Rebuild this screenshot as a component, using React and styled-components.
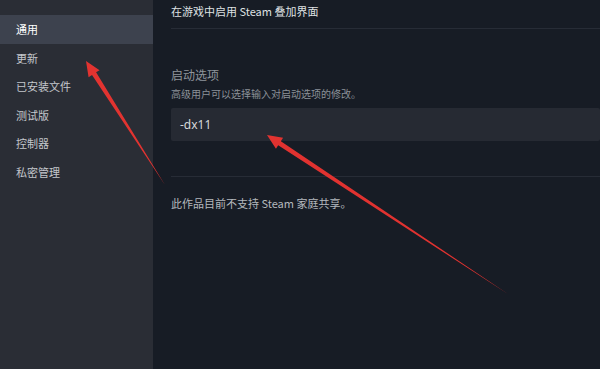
import styled, { createGlobalStyle } from "styled-components"

const GlobalStyle = createGlobalStyle`
  html, body {
    margin: 0;
    padding: 0;
    background: #171c25;
  }
  body {
    font-family: "Noto Sans CJK SC", "Noto Sans", sans-serif;
  }
`

const Page = styled.div`
  position: relative;
  width: 600px;
  height: 369px;
  display: flex;
  overflow: hidden;
  background: #171c25;
`

const Sidebar = styled.nav`
  width: 153px;
  flex-shrink: 0;
  background: #2a2d35;
  padding-top: 15px;
  display: flex;
  flex-direction: column;
`

const MenuItem = styled.div`
  height: 28.5px;
  line-height: 28.5px;
  padding-left: 16px;
  font-size: 11px;
  color: ${(p) => (p.$active ? "#ffffff" : "#c4c7cc")};
  background: ${(p) => (p.$active ? "#3d424e" : "transparent")};
`

const Main = styled.main`
  flex: 1;
  padding-left: 18px;
  display: flex;
  flex-direction: column;
`

const Row = styled.div`
  border-bottom: 1px solid #272c36;
`

const OverlayRow = styled(Row)`
  height: 29px;
  display: flex;
  align-items: center;
  padding-bottom: 6px;
  box-sizing: border-box;
  font-size: 11px;
  color: #dfe1e3;
`

const LaunchSection = styled(Row)`
  padding-top: 38px;
  padding-bottom: 35px;
`

const Label = styled.div`
  font-size: 12px;
  color: #8f959c;
  line-height: 16px;
`

const Hint = styled.div`
  font-size: 10px;
  color: #8b9198;
  line-height: 14px;
  margin-top: 4px;
`

const Input = styled.div`
  margin-top: 7px;
  height: 33px;
  background: #262a33;
  border-radius: 2px;
  display: flex;
  align-items: center;
  padding-left: 9px;
  font-family: "Noto Sans", "Noto Sans CJK SC", sans-serif;
  font-size: 12px;
  color: #d6d8da;
`

const Note = styled.div`
  margin-top: 18px;
  font-size: 11px;
  color: #b4b8bd;
`

const Arrows = styled.svg`
  position: absolute;
  left: 0;
  top: 0;
  pointer-events: none;
`

const items = ["通用", "更新", "已安装文件", "测试版", "控制器", "私密管理"]

// tapered arrow from tail (x1,y1) to tip (x2,y2)
const Arrow = ({ x1, y1, x2, y2 }) => {
  const dx = x2 - x1
  const dy = y2 - y1
  const len = Math.hypot(dx, dy)
  const ux = dx / len
  const uy = dy / len
  const nx = -uy
  const ny = ux
  const head = 15
  const bx = x2 - ux * head
  const by = y2 - uy * head
  const shaft = 2.4
  const wing = 6.5
  const pts = [
    [x1, y1],
    [bx + nx * shaft, by + ny * shaft],
    [bx + nx * wing, by + ny * wing],
    [x2, y2],
    [bx - nx * wing, by - ny * wing],
    [bx - nx * shaft, by - ny * shaft],
  ]
  return (
    <polygon
      points={pts.map((p) => p.join(",")).join(" ")}
      fill="#ec3430"
      opacity="0.95"
    />
  )
}

const App = () => {
  return (
    <>
      <GlobalStyle />
      <Page>
        <Sidebar>
          {items.map((t, i) => (
            <MenuItem key={t} $active={i === 0}>
              {t}
            </MenuItem>
          ))}
        </Sidebar>
        <Main>
          <OverlayRow>在游戏中启用 Steam 叠加界面</OverlayRow>
          <LaunchSection>
            <Label>启动选项</Label>
            <Hint>高级用户可以选择输入对启动选项的修改。</Hint>
            <Input>-dx11</Input>
          </LaunchSection>
          <Note>此作品目前不支持 Steam 家庭共享。</Note>
        </Main>
        <Arrows width="600" height="369" viewBox="0 0 600 369">
          <Arrow x1={165} y1={185} x2={86} y2={61} />
          <Arrow x1={508} y1={294} x2={267} y2={135} />
        </Arrows>
      </Page>
    </>
  )
}

export default App
